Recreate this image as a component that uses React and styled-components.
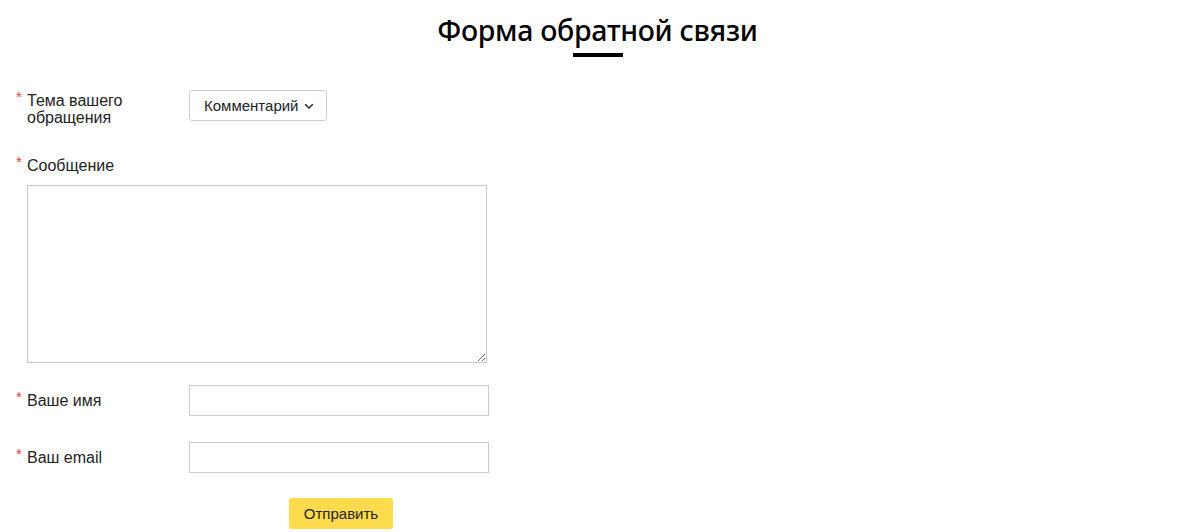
import React from "react";
import styled, { createGlobalStyle } from "styled-components";

const GlobalStyle = createGlobalStyle`
body {
  margin: 0;
  background: #fff;
  font-family: "Liberation Sans", Arial, sans-serif;
  color: #222;
}
`;

function App() {
  return (
    <Page>
      <GlobalStyle />
      <Header>
        <Title>Форма обратной связи</Title>
        <Underline />
      </Header>

      <Form>
        <Row>
          <Label $top={2}>
            <Star>*</Star>
            <span>Тема вашего<br />обращения</span>
          </Label>
          <Select>
            Комментарий
            <svg width="10" height="10" viewBox="0 0 10 10">
              <path d="M1.2 3.2 L5 7 L8.8 3.2" fill="none" stroke="#222" strokeWidth="1.4" />
            </svg>
          </Select>
        </Row>

        <Block>
          <Label>
            <Star>*</Star>
            <span>Сообщение</span>
          </Label>
          <TextArea />
        </Block>

        <Row $gap={22}>
          <Label $top={7}>
            <Star>*</Star>
            <span>Ваше имя</span>
          </Label>
          <Input type="text" />
        </Row>

        <Row $gap={26}>
          <Label $top={7}>
            <Star>*</Star>
            <span>Ваш email</span>
          </Label>
          <Input type="email" />
        </Row>

        <Actions>
          <Button>Отправить</Button>
        </Actions>
      </Form>
    </Page>
  );
}

const Page = styled.div`
width: 100%;
`;

const Header = styled.div`
display: flex;
flex-direction: column;
align-items: center;
padding-top: 11px;
`;

const Title = styled.h1`
margin: 0;
font-family: "Noto Sans", "Open Sans", sans-serif;
font-weight: 500;
font-size: 28.5px;
line-height: 38px;
color: #000;
letter-spacing: -0.3px;
`;

const Underline = styled.div`
width: 50px;
height: 4px;
background: #000;
margin-top: 4px;
`;

const Form = styled.div`
padding: 33px 0 0 16px;
display: flex;
flex-direction: column;
`;

const Row = styled.div`
display: flex;
align-items: flex-start;
margin-top: ${p => (p.$gap ? p.$gap : 0)}px;
`;

const Block = styled.div`
display: flex;
flex-direction: column;
margin-top: 31px;
`;

const Label = styled.div`
width: 173px;
display: flex;
align-items: flex-start;
font-size: 16px;
line-height: 17px;
color: #222;
padding-top: ${p => (p.$top ? p.$top : 0)}px;
`;

const Star = styled.span`
color: #ee3a3a;
font-size: 15px;
line-height: 10px;
width: 11px;
flex-shrink: 0;
`;

const Select = styled.div`
display: flex;
align-items: center;
gap: 6px;
height: 31px;
box-sizing: border-box;
padding: 0 12px 0 14px;
border: 1px solid #ccc;
border-radius: 3px;
font-size: 15px;
color: #222;
background: #fff;
`;

const TextArea = styled.textarea`
display: block;
margin: 11px 0 0 11px;
width: 460px;
height: 178px;
box-sizing: border-box;
border: 1px solid #c8c8c8;
padding: 4px;
font-family: inherit;
`;

const Input = styled.input`
width: 300px;
height: 31px;
box-sizing: border-box;
border: 1px solid #ccc;
margin: 0;
padding: 0 8px;
font-family: inherit;
font-size: 14px;
`;

const Actions = styled.div`
display: flex;
padding-left: 273px;
margin-top: 25px;
`;

const Button = styled.button`
width: 104px;
height: 31px;
border: none;
border-radius: 3px;
background: #ffdb4d;
font-family: "Liberation Sans", Arial, sans-serif;
font-size: 15px;
color: #222;
cursor: pointer;
`;

export default App;
